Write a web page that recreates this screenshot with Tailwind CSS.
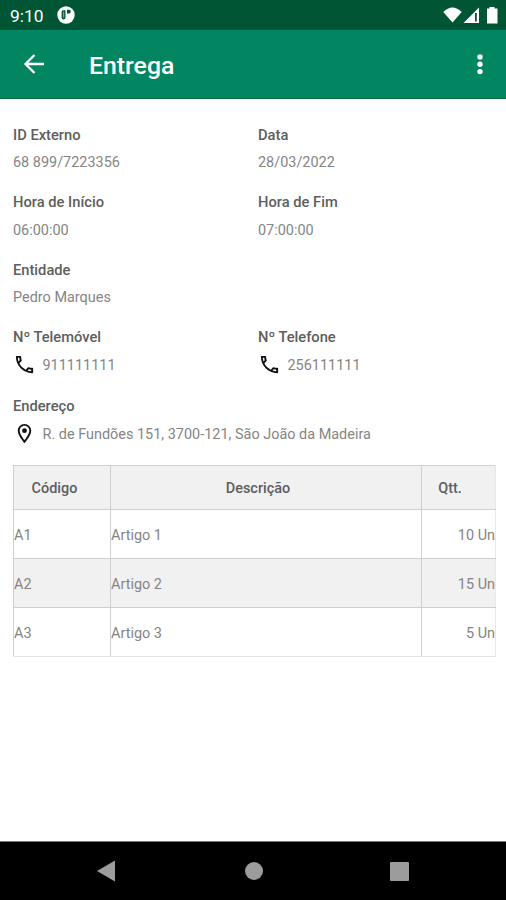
<!DOCTYPE html>
<html lang="pt">
<head>
<meta charset="utf-8">
<title>Entrega</title>
<script src="https://cdn.jsdelivr.net/npm/@tailwindcss/browser@4"></script>
</head>
<body class="bg-white">
<div class="w-[506px] h-[900px] flex flex-col bg-white font-['Roboto',sans-serif] text-[14.450px] text-[#858585] overflow-hidden">
  <div class="h-[30px] shrink-0 bg-[#005634] flex items-center pl-[10px] pr-[8px] text-white">
    <span class="text-[17.400px] leading-[30px] w-[47px] pt-[2px]">9:10</span>
    <svg class="w-[18px] h-[18px]" viewBox="0 0 18 18"><circle cx="9" cy="9" r="8.700" fill="#fff"/><path d="M8.500 4.300H6.200Q4.600 4.300 4.600 6v5.200q0 2.200 2 2.200 1.900 0 1.900-2.200V4.300M10 3.800h2.300q1.400 0 1.400 1.800T12.300 7.500H10z" fill="#005634"/><path d="M6.700 5.500v6" stroke="#fff" stroke-width=".6"/></svg>
    <svg class="w-[56px] h-[20px] ml-auto" viewBox="0 0 56 20" fill="#fff"><path d="M1.300 7Q10.400-2 19.700 7L10.500 17.500z"/><path fill-rule="evenodd" d="M37 2.500V18H21.500zM33 8v8.500h1.800V8z"/><path d="M45 3.500h2.500V2h5v1.500H55.500V18.500H45z"/></svg>
  </div>
  <div class="h-[69px] shrink-0 bg-[#028661] border-b border-[#087044] flex items-center pl-[23px] pr-[23px] text-white">
    <svg class="w-[22px] h-[20px]" viewBox="0 0 22 20" fill="none" stroke="#fff" stroke-width="2.300"><path d="M21 10H2.500M11.500 1L2.500 10l9 9"/></svg>
    <h1 class="ml-[44px] text-[24.800px] font-medium leading-[30px] pt-[4px]">Entrega</h1>
    <svg class="w-[6px] h-[22px] ml-auto" viewBox="0 0 6 22" fill="#fff"><circle cx="3" cy="4" r="2.700"/><circle cx="3" cy="11.300" r="2.700"/><circle cx="3" cy="18.600" r="2.700"/></svg>
  </div>
  <main class="grow px-[13px] pt-[22.500px]">
    <div class="grid grid-cols-[245px_1fr] gap-y-[12.500px] leading-[27.500px]">
      <div><div class="text-[14.700px] font-medium text-[#5e5e5e]">ID Externo</div><div>68 899/7223356</div></div>
      <div><div class="text-[14.700px] font-medium text-[#5e5e5e]">Data</div><div>28/03/2022</div></div>
      <div><div class="text-[14.700px] font-medium text-[#5e5e5e]">Hora de Início</div><div>06:00:00</div></div>
      <div><div class="text-[14.700px] font-medium text-[#5e5e5e]">Hora de Fim</div><div>07:00:00</div></div>
      <div class="col-span-2"><div class="text-[14.700px] font-medium text-[#5e5e5e]">Entidade</div><div>Pedro Marques</div></div>
      <div><div class="text-[14.700px] font-medium text-[#5e5e5e]">Nº Telemóvel</div>
        <div class="flex items-center h-[28.500px]"><svg class="w-[23px] h-[23px] mr-[6.500px] mb-[2px]" viewBox="0 0 24 24" fill="#111"><path d="M6.540 5c.06.89.21 1.760.45 2.590l-1.200 1.200c-.41-1.200-.67-2.470-.76-3.790h1.510m9.860 12.020c.85.24 1.720.39 2.600.45v1.490c-1.320-.09-2.590-.35-3.800-.75l1.200-1.190M7.500 3H4c-.55 0-1 .45-1 1 0 9.390 7.610 17 17 17 .55 0 1-.45 1-1v-3.490c0-.55-.45-1-1-1-1.240 0-2.450-.2-3.570-.57-.35-.1-.75-.02-1.020.24l-2.200 2.200c-2.830-1.450-5.150-3.760-6.590-6.590l2.200-2.200c.28-.28.36-.67.25-1.020C8.700 6.450 8.500 5.250 8.500 4c0-.55-.45-1-1-1z"/></svg>911111111</div></div>
      <div><div class="text-[14.700px] font-medium text-[#5e5e5e]">Nº Telefone</div>
        <div class="flex items-center h-[28.500px]"><svg class="w-[23px] h-[23px] mr-[6.500px] mb-[2px]" viewBox="0 0 24 24" fill="#111"><path d="M6.540 5c.06.89.21 1.760.45 2.590l-1.200 1.200c-.41-1.200-.67-2.470-.76-3.790h1.510m9.860 12.020c.85.24 1.720.39 2.600.45v1.490c-1.320-.09-2.590-.35-3.800-.75l1.200-1.190M7.500 3H4c-.55 0-1 .45-1 1 0 9.390 7.610 17 17 17 .55 0 1-.45 1-1v-3.490c0-.55-.45-1-1-1-1.240 0-2.450-.2-3.570-.57-.35-.1-.75-.02-1.020.24l-2.200 2.200c-2.830-1.450-5.150-3.760-6.590-6.590l2.200-2.200c.28-.28.36-.67.25-1.020C8.700 6.450 8.500 5.250 8.500 4c0-.55-.45-1-1-1z"/></svg>256111111</div></div>
      <div class="col-span-2"><div class="text-[14.700px] font-medium text-[#5e5e5e]">Endereço</div>
        <div class="flex items-center h-[28px]"><svg class="w-[23px] h-[23px] mr-[6.500px] mb-[2px]" viewBox="0 0 24 24" fill="#111"><path d="M12 2C8.130 2 5 5.130 5 9c0 5.250 7 13 7 13s7-7.750 7-13c0-3.870-3.130-7-7-7zM7 9c0-2.760 2.240-5 5-5s5 2.240 5 5c0 2.880-2.880 7.190-5 9.880C9.920 16.210 7 11.850 7 9z"/><circle cx="12" cy="9" r="2.500"/></svg><span class="pt-px">R. de Fundões 151, 3700-121, São João da Madeira</span></div></div>
    </div>
    <table class="mt-[17px] w-[482px] table-fixed border-collapse border border-[#cfcfcf]">
      <colgroup><col class="w-[97px]"><col class="w-[311px]"><col class="w-[74px]"></colgroup>
      <thead><tr class="h-[44px] bg-[#f1f1f1] text-[#5e5e5e]">
        <th class="border border-[#cfcfcf] font-medium p-0 pt-[3px] pr-[15px]">Código</th>
        <th class="border border-[#cfcfcf] font-medium p-0 pt-[3px] pr-[16px]">Descrição</th>
        <th class="border border-[#cfcfcf] border-r-[#e8e8e8] font-medium p-0 pt-[3px] pr-[17px]">Qtt.</th></tr></thead>
      <tbody>
        <tr class="h-[49px]"><td class="border border-[#cfcfcf] p-0 pt-[3px]">A1</td><td class="border border-[#cfcfcf] p-0 pt-[3px]">Artigo 1</td><td class="border border-[#cfcfcf] border-r-[#e8e8e8] p-0 pt-[3px] text-right">10 Un</td></tr>
        <tr class="h-[49px] bg-[#f1f1f1]"><td class="border border-[#cfcfcf] p-0 pt-[3px]">A2</td><td class="border border-[#cfcfcf] p-0 pt-[3px]">Artigo 2</td><td class="border border-[#cfcfcf] border-r-[#e8e8e8] p-0 pt-[3px] text-right">15 Un</td></tr>
        <tr class="h-[49px]"><td class="border border-[#cfcfcf] border-b-[#e4e4e4] p-0 pt-[3px]">A3</td><td class="border border-[#cfcfcf] border-b-[#e4e4e4] p-0 pt-[3px]">Artigo 3</td><td class="border border-[#cfcfcf] border-r-[#e8e8e8] border-b-[#e4e4e4] p-0 pt-[3px] text-right">5 Un</td></tr>
      </tbody>
    </table>
  </main>
  <nav class="h-[59px] shrink-0 bg-black border-t border-[#777] flex items-center pl-[97px] pr-[97px] justify-between">
    <svg class="w-[18px] h-[22px]" viewBox="0 0 18 22" fill="#9c9c9c"><path d="M18 .5v21L0 11z"/></svg>
    <div class="w-[18px] h-[18px] rounded-full bg-[#9c9c9c] ml-[2px]"></div>
    <div class="w-[19px] h-[19px] rounded-[1px] bg-[#9c9c9c]"></div>
  </nav>
</div>
</body>
</html>
